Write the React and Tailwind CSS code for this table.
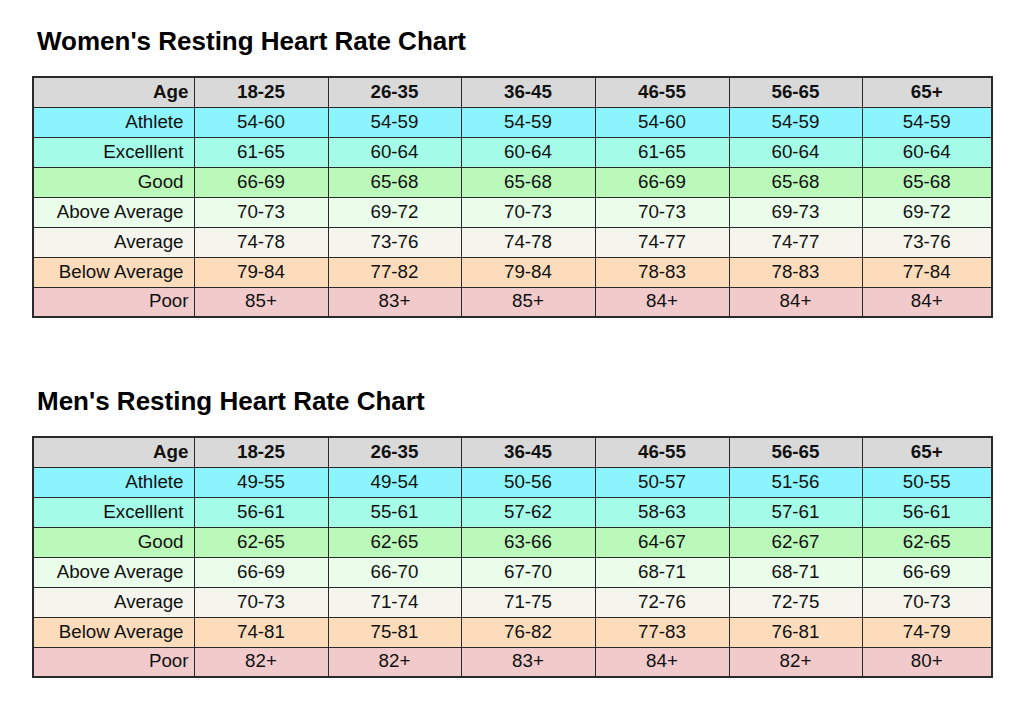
const ages = ["18-25", "26-35", "36-45", "46-55", "56-65", "65+"];

const rowStyles = {
  Athlete: "bg-[#8cf4fc]",
  Excellent: "bg-[#a4fce8]",
  Good: "bg-[#bbf9bb]",
  "Above Average": "bg-[#eafcea]",
  Average: "bg-[#f5f5ed]",
  "Below Average": "bg-[#fddcbc]",
  Poor: "bg-[#f1cbcb]",
};

const women = [
  ["Athlete", ["54-60", "54-59", "54-59", "54-60", "54-59", "54-59"]],
  ["Excellent", ["61-65", "60-64", "60-64", "61-65", "60-64", "60-64"]],
  ["Good", ["66-69", "65-68", "65-68", "66-69", "65-68", "65-68"]],
  ["Above Average", ["70-73", "69-72", "70-73", "70-73", "69-73", "69-72"]],
  ["Average", ["74-78", "73-76", "74-78", "74-77", "74-77", "73-76"]],
  ["Below Average", ["79-84", "77-82", "79-84", "78-83", "78-83", "77-84"]],
  ["Poor", ["85+", "83+", "85+", "84+", "84+", "84+"]],
];

const men = [
  ["Athlete", ["49-55", "49-54", "50-56", "50-57", "51-56", "50-55"]],
  ["Excellent", ["56-61", "55-61", "57-62", "58-63", "57-61", "56-61"]],
  ["Good", ["62-65", "62-65", "63-66", "64-67", "62-67", "62-65"]],
  ["Above Average", ["66-69", "66-70", "67-70", "68-71", "68-71", "66-69"]],
  ["Average", ["70-73", "71-74", "71-75", "72-76", "72-75", "70-73"]],
  ["Below Average", ["74-81", "75-81", "76-82", "77-83", "76-81", "74-79"]],
  ["Poor", ["82+", "82+", "83+", "84+", "82+", "80+"]],
];

function Chart({ title, rows, className }) {
  return (
    <section className={className}>
      <h2 className="ml-[5px] text-[26px] leading-[30px] font-bold text-black">{title}</h2>
      <table className="mt-[20px] w-[959px] table-fixed border-collapse border-2 border-[#2a2a2a] text-[18.75px] leading-none text-[#111]">
        <colgroup>
          <col className="w-[161px]" />
          <col className="w-[134px]" />
          <col className="w-[133px]" />
          <col className="w-[134px]" />
          <col className="w-[134px]" />
          <col className="w-[133px]" />
          <col className="w-[130px]" />
        </colgroup>
        <thead>
          <tr className="h-[30px] bg-[#d9d9d9] font-bold">
            <th className="border border-[#2a2a2a] pr-[5px] text-right">Age</th>
            {ages.map((a) => (
              <th key={a} className="border border-[#2a2a2a] text-center">{a}</th>
            ))}
          </tr>
        </thead>
        <tbody>
          {rows.map(([label, vals]) => (
            <tr key={label} className={`h-[30px] ${rowStyles[label]}`}>
              <td className={`border border-[#2a2a2a] text-right ${label === "Poor" ? "pr-[5px]" : "pr-[10px]"}`}>
                {label === "Excellent" ? "Excelllent" : label}
              </td>
              {vals.map((v, i) => (
                <td key={i} className="border border-[#2a2a2a] text-center">{v}</td>
              ))}
            </tr>
          ))}
        </tbody>
      </table>
    </section>
  );
}

export default function App() {
  return (
    <div className="min-h-[727px] w-[1024px] bg-white px-[32px] pt-[26px] font-['Liberation_Sans',Arial,sans-serif]">
      <Chart title="Women's Resting Heart Rate Chart" rows={women} />
      <Chart title="Men's Resting Heart Rate Chart" rows={men} className="mt-[68px]" />
    </div>
  );
}
